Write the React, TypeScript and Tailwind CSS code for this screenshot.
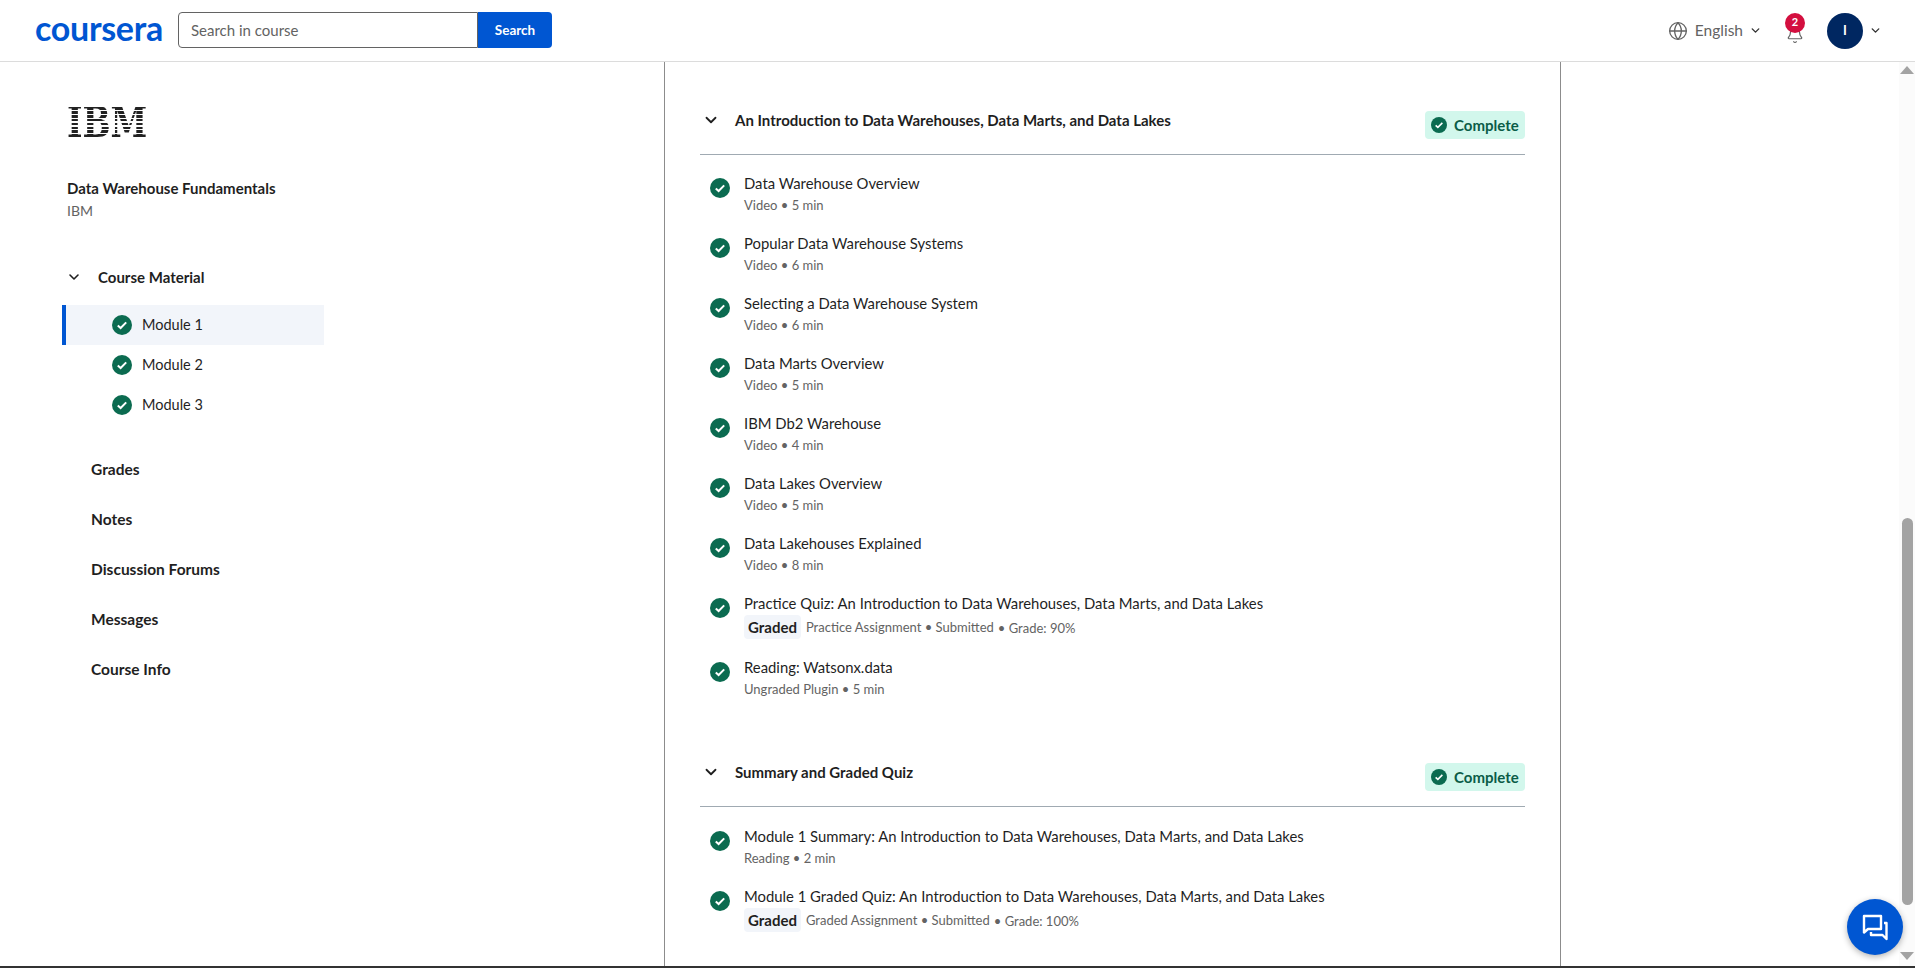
import { Bell, ChevronDown, Globe } from "lucide-react";

function CheckDot({ size = "w-[20px] h-[20px]" }: { size?: string }) {
  return (
    <svg viewBox="0 0 20 20" className={`${size} shrink-0`}>
      <circle cx="10" cy="10" r="10" fill="#0b6b50" />
      <path d="M5.8 10.4l2.8 2.6 5.6-5.6" fill="none" stroke="#fff" strokeWidth="2" />
    </svg>
  );
}

function CompleteBadge() {
  return (
    <div className="flex items-center gap-[7px] h-[28px] w-[100px] pl-[6px] rounded bg-[#d2f7ec] text-[#0b5c47] text-[15px] font-bold">
      <CheckDot size="w-[16px] h-[16px]" />
      Complete
    </div>
  );
}

function Lesson({ title, meta, grade, graded }: { title: string; meta: string; grade?: string; graded?: boolean }) {
  return (
    <div className="flex items-start pl-[10px]">
      <div className="pt-[6px] mr-[14px]">
        <CheckDot />
      </div>
      <div>
        <div className="text-[14.85px] leading-[22px] text-[#1f1f1f] whitespace-nowrap">{title}</div>
        <div className="flex items-center mt-[1px] text-[13px] leading-[20px] text-[#636363] whitespace-nowrap">
          {graded && (
            <span className="bg-[#f2f5fa] rounded-sm px-[4px] mr-[5px] h-[24px] flex items-center text-[15px] font-bold text-[#1f1f1f]">
              Graded
            </span>
          )}
          {meta}
          {grade && <span className="ml-[4px] mt-[1px] text-[13px]">• {grade}</span>}
        </div>
      </div>
    </div>
  );
}

function SectionHead({ title }: { title: string }) {
  return (
    <div className="flex items-start justify-between h-[61px] border-b border-[#a0aab2]">
      <div className="flex items-center h-[52px]">
        <ChevronDown className="w-[18px] h-[18px] ml-[2px] mr-[15px] text-[#1f1f1f]" strokeWidth={2.4} />
        <span className="text-[15px] font-bold text-[#1f1f1f]">{title}</span>
      </div>
      <div className="pt-[17px]">
        <CompleteBadge />
      </div>
    </div>
  );
}

const intro = [
  { title: "Data Warehouse Overview", meta: "Video • 5 min" },
  { title: "Popular Data Warehouse Systems", meta: "Video • 6 min" },
  { title: "Selecting a Data Warehouse System", meta: "Video • 6 min" },
  { title: "Data Marts Overview", meta: "Video • 5 min" },
  { title: "IBM Db2 Warehouse", meta: "Video • 4 min" },
  { title: "Data Lakes Overview", meta: "Video • 5 min" },
  { title: "Data Lakehouses Explained", meta: "Video • 8 min" },
];

export default function App() {
  return (
    <div className="h-[968px] w-[1915px] overflow-hidden bg-white flex flex-col font-['Lato','Liberation_Sans',sans-serif] text-[#1f1f1f] relative">
      <header className="h-[62px] shrink-0 border-b border-[#dcdcdc] flex items-center pl-[35px] pr-[33px]">
        <span className="w-[143px] text-[#0056d2] text-[34px] font-bold tracking-[-0.3px] leading-none pb-[6px]">coursera</span>
        <div className="flex h-[36px] w-[374px] mb-[1px]">
          <div className="flex-1 border border-[#636363] rounded-l flex items-center pl-[12px] text-[15px] text-[#636363]">
            Search in course
          </div>
          <button className="w-[74px] bg-[#0056d2] text-white text-[13.5px] font-bold rounded-r">Search</button>
        </div>
        <div className="ml-auto flex items-center text-[#636363]">
          <Globe className="w-[20px] h-[20px] mr-[7px]" strokeWidth={1.6} />
          <span className="text-[15.5px]">English</span>
          <ChevronDown className="w-[13px] h-[13px] ml-[6px] text-[#333]" strokeWidth={2.6} />
          <div className="relative ml-[24px] mr-[23px]">
            <Bell className="w-[18px] h-[18px] mt-[8px]" strokeWidth={1.6} />
            <span className="absolute -top-[5px] -left-[1px] w-[20px] h-[20px] rounded-full bg-[#d30f3f] text-white text-[11px] font-bold flex items-center justify-center">
              2
            </span>
          </div>
          <div className="w-[36px] h-[36px] rounded-full bg-[#002761] text-white text-[13px] font-bold flex items-center justify-center">
            I
          </div>
          <ChevronDown className="w-[13px] h-[13px] ml-[6px] text-[#333]" strokeWidth={2.6} />
        </div>
      </header>

      <div className="flex flex-1 min-h-0">
        <aside className="w-[664px] shrink-0 pl-[62px]">
          <div className="pl-[5px] pt-[45px] h-[70px] box-content">
            <div className="w-[78px] h-[31px]">
              <span className="block origin-top-left scale-x-[0.79] font-['DejaVu_Serif',serif] font-bold text-[42px] leading-[31px] text-transparent bg-clip-text bg-[repeating-linear-gradient(to_bottom,#222_0px,#222_2.7px,#fff_2.7px,#fff_3.9px)] w-[110px]">
                IBM
              </span>
            </div>
          </div>
          <div className="pl-[5px] text-[15px] font-bold leading-[22px]">Data Warehouse Fundamentals</div>
          <div className="pl-[5px] text-[14px] leading-[22px] text-[#636363] mt-[1px]">IBM</div>
          <div className="flex items-center h-[24px] mt-[43px]">
            <ChevronDown className="w-[16px] h-[16px] ml-[4px] mr-[16px]" strokeWidth={2.4} />
            <span className="text-[15px] font-bold">Course Material</span>
          </div>
          <div className="mt-[16px] w-[262px]">
            {["Module 1", "Module 2", "Module 3"].map((m, i) => (
              <div
                key={m}
                className={`h-[40px] flex items-center gap-[10px] text-[14.5px] ${
                  i === 0 ? "bg-[#f2f5fa] border-l-4 border-[#0056d2] pl-[46px]" : "pl-[50px]"
                }`}
              >
                <CheckDot />
                {m}
              </div>
            ))}
          </div>
          <nav className="mt-[32px] pl-[29px] flex flex-col gap-[26px] text-[15.5px] font-bold leading-[24px]">
            <span>Grades</span>
            <span>Notes</span>
            <span>Discussion Forums</span>
            <span>Messages</span>
            <span>Course Info</span>
          </nav>
        </aside>

        <main className="w-[897px] shrink-0 border-x border-[#8c8c8c] pl-[35px] pr-[35px] pt-[32px]">
          <SectionHead title="An Introduction to Data Warehouses, Data Marts, and Data Lakes" />
          <div className="flex flex-col gap-[17px] pt-[17px]">
            {intro.map((l) => (
              <Lesson key={l.title} {...l} />
            ))}
            <Lesson
              title="Practice Quiz: An Introduction to Data Warehouses, Data Marts, and Data Lakes"
              meta="Practice Assignment • Submitted"
              grade="Grade: 90%"
              graded
            />
            <Lesson title="Reading: Watsonx.data" meta="Ungraded Plugin • 5 min" />
          </div>
          <div className="mt-[47px]">
            <SectionHead title="Summary and Graded Quiz" />
          </div>
          <div className="flex flex-col gap-[17px] pt-[18px]">
            <Lesson title="Module 1 Summary: An Introduction to Data Warehouses, Data Marts, and Data Lakes" meta="Reading • 2 min" />
            <Lesson
              title="Module 1 Graded Quiz: An Introduction to Data Warehouses, Data Marts, and Data Lakes"
              meta="Graded Assignment • Submitted"
              grade="Grade: 100%"
              graded
            />
          </div>
        </main>

        <div className="flex-1" />

        <div className="w-[16px] shrink-0 bg-[#fbfbfb] flex flex-col items-center pt-[4px]">
          <div className="w-0 h-0 border-x-[7px] border-x-transparent border-b-[8px] border-b-[#a3a3a3]" />
          <div className="w-[11px] h-[387px] mt-[444px] rounded-full bg-[#a3a3a3]" />
          <div className="w-0 h-0 mt-[47px] border-x-[7px] border-x-transparent border-t-[8px] border-t-[#a3a3a3]" />
        </div>
      </div>

      <div className="h-[2px] shrink-0 bg-[#333]" />

      <button className="absolute left-[1847px] top-[899px] w-[56px] h-[56px] rounded-full bg-[#0056d2] shadow-[0_2px_6px_rgba(0,0,0,0.3)] flex items-center justify-center">
        <svg viewBox="0 0 28 28" className="w-[28px] h-[28px]" fill="none" stroke="#fff" strokeWidth="2.4" strokeLinejoin="round">
          <path d="M3 3h17v13H7l-4 3.5z" />
          <path d="M23 10h2.5v16l-4-4H10v-3" />
        </svg>
      </button>
    </div>
  );
}
